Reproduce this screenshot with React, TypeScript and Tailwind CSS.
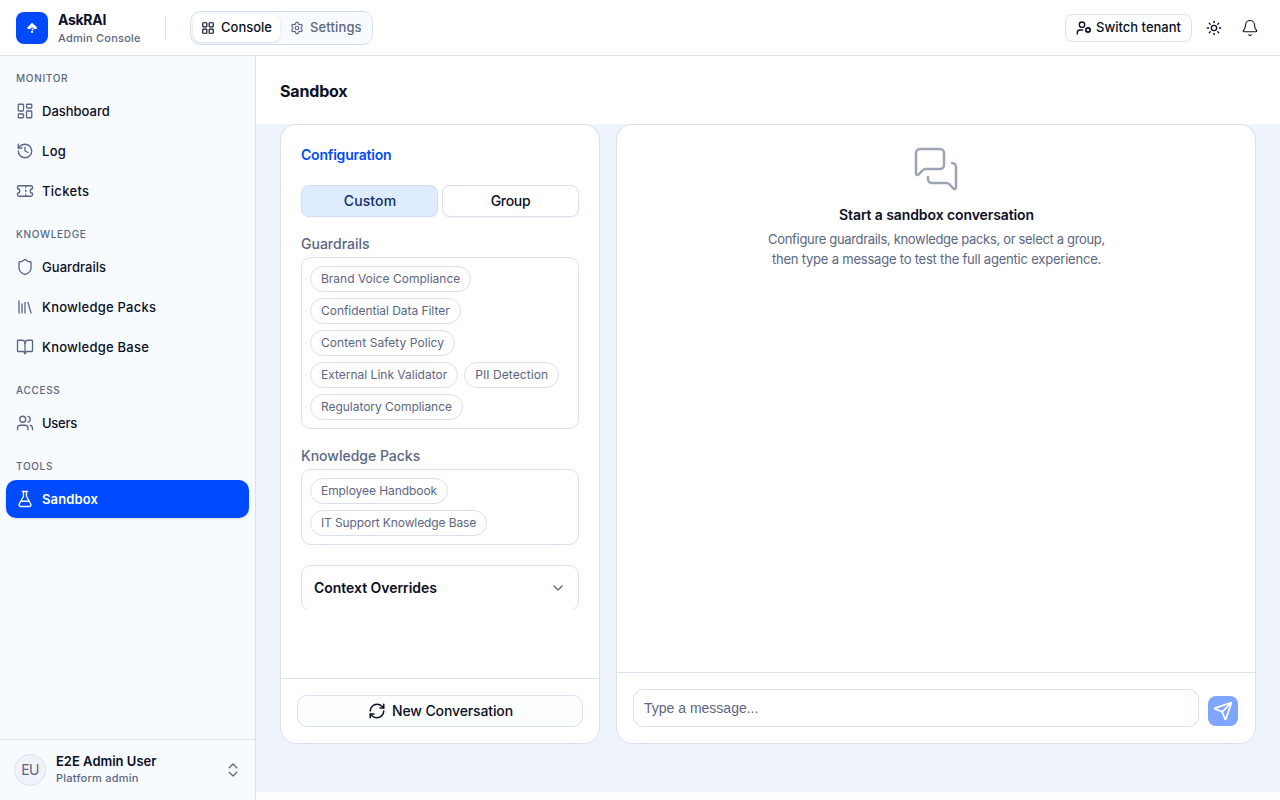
import {
  Bell,
  BookOpen,
  ChevronDown,
  ChevronsUpDown,
  FlaskConical,
  History,
  LayoutDashboard,
  LayoutGrid,
  Library,
  MessagesSquare,
  RefreshCw,
  Send,
  Settings,
  Shield,
  Sun,
  Ticket,
  UserCog,
  Users,
  type LucideIcon,
} from "lucide-react";

type NavItem = {
  label: string;
  icon: LucideIcon;
  active?: boolean;
  tracking?: string;
};

type Chip = { label: string; tracking?: string };

const navGroups: { title: string; items: NavItem[] }[] = [
  {
    title: "MONITOR",
    items: [
      { label: "Dashboard", icon: LayoutDashboard },
      { label: "Log", icon: History, tracking: "tracking-[0.3px]" },
      { label: "Tickets", icon: Ticket, tracking: "tracking-[0.3px]" },
    ],
  },
  {
    title: "KNOWLEDGE",
    items: [
      { label: "Guardrails", icon: Shield, tracking: "tracking-[0.05px]" },
      { label: "Knowledge Packs", icon: Library, tracking: "tracking-[0.23px]" },
      { label: "Knowledge Base", icon: BookOpen, tracking: "tracking-[0.23px]" },
    ],
  },
  {
    title: "ACCESS",
    items: [{ label: "Users", icon: Users, tracking: "tracking-[-0.25px]" }],
  },
  {
    title: "TOOLS",
    items: [
      {
        label: "Sandbox",
        icon: FlaskConical,
        active: true,
        tracking: "tracking-[0.12px]",
      },
    ],
  },
];

const guardrails: Chip[] = [
  { label: "Brand Voice Compliance" },
  { label: "Confidential Data Filter", tracking: "tracking-[-0.04px]" },
  { label: "Content Safety Policy", tracking: "tracking-[0.05px]" },
  { label: "External Link Validator" },
  { label: "PII Detection", tracking: "tracking-[0.08px]" },
  { label: "Regulatory Compliance", tracking: "tracking-[-0.04px]" },
];

const knowledgePacks: Chip[] = [
  { label: "Employee Handbook", tracking: "tracking-[-0.07px]" },
  { label: "IT Support Knowledge Base", tracking: "tracking-[-0.11px]" },
];

// Square brand mark
const Logo = () => (
  <div className="flex size-8 items-center justify-center rounded-lg bg-[#004bff]">
    <svg width="12" height="12" viewBox="0 0 12 12" fill="white">
      <path d="M6 0.8 L10.9 5.2 Q11.4 7 9.6 7.1 L8 7 Q7.6 5.6 6.2 5.6 Q5 5.6 4.6 7 L2.6 7.1 Q0.8 7 1.3 5.4 Z" />
      <circle cx="6.6" cy="7.4" r="1" />
      <circle cx="6" cy="9.9" r="1.1" />
    </svg>
  </div>
);

// Top bar with the brand, the section switch and the actions
const Header = () => (
  <header className="flex h-14 shrink-0 items-center border-b border-[#d9e1f0] bg-white pl-4 pr-[21px]">
    <Logo />
    <div className="ml-2.5 flex w-[83px] flex-col whitespace-nowrap pt-px">
      <span className="text-sm/[18px] font-bold tracking-[-0.3px]">AskRAI</span>
      <span className="pt-px text-[11px]/[16px] font-medium tracking-[0.23px] text-[#5b6682]">
        Admin Console
      </span>
    </div>
    <div className="ml-6 h-6 w-px bg-[#d9e1f0]" />
    <div className="ml-6 flex gap-0.5 rounded-[10px] border border-[#d9e1f0] bg-[#f7fbff] p-0.5 text-[13px] font-medium">
      <button className="flex h-7 items-center gap-1.5 rounded-lg bg-white px-2 shadow-sm">
        <LayoutGrid size={14} />
        Console
      </button>
      <button className="flex h-7 items-center gap-1.5 rounded-lg px-2 tracking-[0.13px] text-[#5b6682]">
        <Settings size={14} />
        Settings
      </button>
    </div>
    <button className="ml-auto flex h-7 items-center gap-1 rounded-lg border border-[#d9e1f0] bg-[#fbfdff] px-2.5 text-[13px] font-medium">
      <UserCog size={16} />
      Switch tenant
    </button>
    <Sun size={16} className="ml-3.5" />
    <Bell size={18} strokeWidth={1.5} className="ml-[19px]" />
  </header>
);

const Sidebar = () => (
  <aside className="flex w-64 shrink-0 flex-col border-r border-[#d9e1f0] bg-[#f7fbff]">
    <nav className="flex flex-1 flex-col gap-4 px-1.5 pt-3.5">
      {navGroups.map((group) => (
        <div key={group.title}>
          <div className="mb-1.5 pl-2.5 text-[10px]/4 font-medium tracking-[0.68px] text-[#5b6682]">
            {group.title}
          </div>
          <ul className="flex flex-col gap-0.5">
            {group.items.map(({ label, icon: Icon, active, tracking }) => (
              <li
                key={label}
                className={
                  active
                    ? "flex h-[38px] items-center gap-2 rounded-[10px] bg-[#004bff] px-2.5 text-[13px] font-semibold text-white shadow-sm"
                    : "flex h-[38px] items-center gap-2 px-2.5 text-[13px] font-medium"
                }
              >
                <Icon
                  size={18}
                  strokeWidth={1.75}
                  className={active ? "text-white" : "text-[#5b6682]"}
                />
                <span className={`pt-0.5 ${tracking ?? ""}`}>{label}</span>
              </li>
            ))}
          </ul>
        </div>
      ))}
    </nav>
    {/* Signed in user */}
    <div className="flex h-[61px] items-center border-t border-[#d9e1f0] pl-3.5 pr-[13px]">
      <div className="flex size-8 items-center justify-center rounded-full border border-[#d9e1f0] bg-[#eef3fc] text-sm tracking-[-0.6px] text-[#5b6682]">
        EU
      </div>
      <div className="ml-2.5 flex flex-col pb-0.5">
        <span className="text-[13px]/[17px] font-semibold">E2E Admin User</span>
        <span className="text-[11px]/[16px] font-medium tracking-[0.23px] text-[#5b6682]">
          Platform admin
        </span>
      </div>
      <ChevronsUpDown size={18} strokeWidth={1.75} className="ml-auto text-[#5b6682]" />
    </div>
  </aside>
);

const ChipBox = ({ title, chips }: { title: string; chips: Chip[] }) => (
  <div className="flex flex-col gap-0.5">
    <span className="text-sm/[22px] font-medium text-[#5b6682]">{title}</span>
    <div className="flex flex-wrap gap-1.5 rounded-[10px] border border-[#d9e1f0] p-2">
      {chips.map(({ label, tracking }) => (
        <span
          key={label}
          className={`flex h-[26px] items-center rounded-full border border-[#d9e1f0] px-2.5 text-xs text-[#5b6682] ${tracking ?? ""}`}
        >
          {label}
        </span>
      ))}
    </div>
  </div>
);

// Left card: guardrails, knowledge packs and overrides
const ConfigPanel = () => (
  <section className="flex w-80 flex-col rounded-2xl border border-[#d9e1f0] bg-white">
    <div className="flex flex-1 flex-col px-5 pt-5">
      <h2 className="text-sm/5 font-semibold tracking-[-0.2px] text-[#004bff]">
        Configuration
      </h2>
      <div className="mt-5 grid grid-cols-2 gap-1 text-sm font-medium">
        <button className="h-8 rounded-lg border border-[#d3def0] bg-[#deecff] pl-px tracking-[0.1px] text-[#0f2d66] shadow-xs">
          Custom
        </button>
        <button className="h-8 rounded-lg border border-[#d9e1f0] bg-white tracking-[-0.3px] shadow-xs">
          Group
        </button>
      </div>
      <div className="mt-4 flex flex-col gap-4">
        <ChipBox title="Guardrails" chips={guardrails} />
        <ChipBox title="Knowledge Packs" chips={knowledgePacks} />
      </div>
      <div className="mt-5 h-11 overflow-hidden">
        <div className="flex h-[46px] items-center justify-between rounded-[10px] border border-[#d9e1f0] px-3">
          <span className="text-sm font-semibold tracking-[-0.04px]">
            Context Overrides
          </span>
          <ChevronDown size={16} className="text-[#5b6682]" />
        </div>
      </div>
    </div>
    <div className="border-t border-[#d9e1f0] p-4">
      <button className="flex h-8 w-full items-center justify-center gap-1.5 rounded-[10px] border border-[#d9e1f0] bg-[#fbfdff] pl-px text-sm font-medium tracking-[-0.12px]">
        <RefreshCw size={18} />
        New Conversation
      </button>
    </div>
  </section>
);

// Right card: empty conversation and the message box
const ChatPanel = () => (
  <section className="flex flex-1 flex-col rounded-2xl border border-[#d9e1f0] bg-white">
    <div className="flex flex-1 flex-col items-center pt-5 text-center">
      <MessagesSquare size={48} strokeWidth={1.25} className="text-[#9ea4b6]" />
      <h3 className="mt-3 pl-px text-sm/5 font-semibold tracking-[-0.1px]">
        Start a sandbox conversation
      </h3>
      <p className="mt-1 pl-px text-[13px]/5 text-[#5b6682]">
        <span className="block tracking-[-0.33px]">
          Configure guardrails, knowledge packs, or select a group,
        </span>
        <span className="block tracking-[-0.21px]">
          then type a message to test the full agentic experience.
        </span>
      </p>
    </div>
    <div className="flex items-end gap-[9px] border-t border-[#d9e1f0] py-4 pl-4 pr-[17px]">
      <textarea
        rows={1}
        placeholder="Type a message..."
        className="block h-[38px] flex-1 resize-none rounded-[10px] border border-[#d9e1f0] px-2.5 py-2 font-['Liberation_Sans',sans-serif] text-sm/5 placeholder:text-[#5b6682] placeholder:opacity-100"
      />
      <button className="mb-px flex size-[30px] items-center justify-center rounded-lg bg-[#80a5ff] text-white">
        <Send size={20} />
      </button>
    </div>
  </section>
);

const App = () => {
  return (
    <div className="flex h-screen flex-col overflow-hidden bg-[#fbfdff] font-[Inter,sans-serif] text-[#0b1026]">
      <Header />
      <div className="flex min-h-0 flex-1">
        <Sidebar />
        <main className="flex flex-1 flex-col pb-2">
          <div className="flex h-[68px] shrink-0 items-center bg-white px-6 pt-0.5">
            <h1 className="text-base font-bold tracking-[-0.17px]">Sandbox</h1>
          </div>
          <div className="flex flex-1 gap-4 bg-[#eef3fc] px-6 pb-12">
            <ConfigPanel />
            <ChatPanel />
          </div>
        </main>
      </div>
    </div>
  );
};

export default App;
